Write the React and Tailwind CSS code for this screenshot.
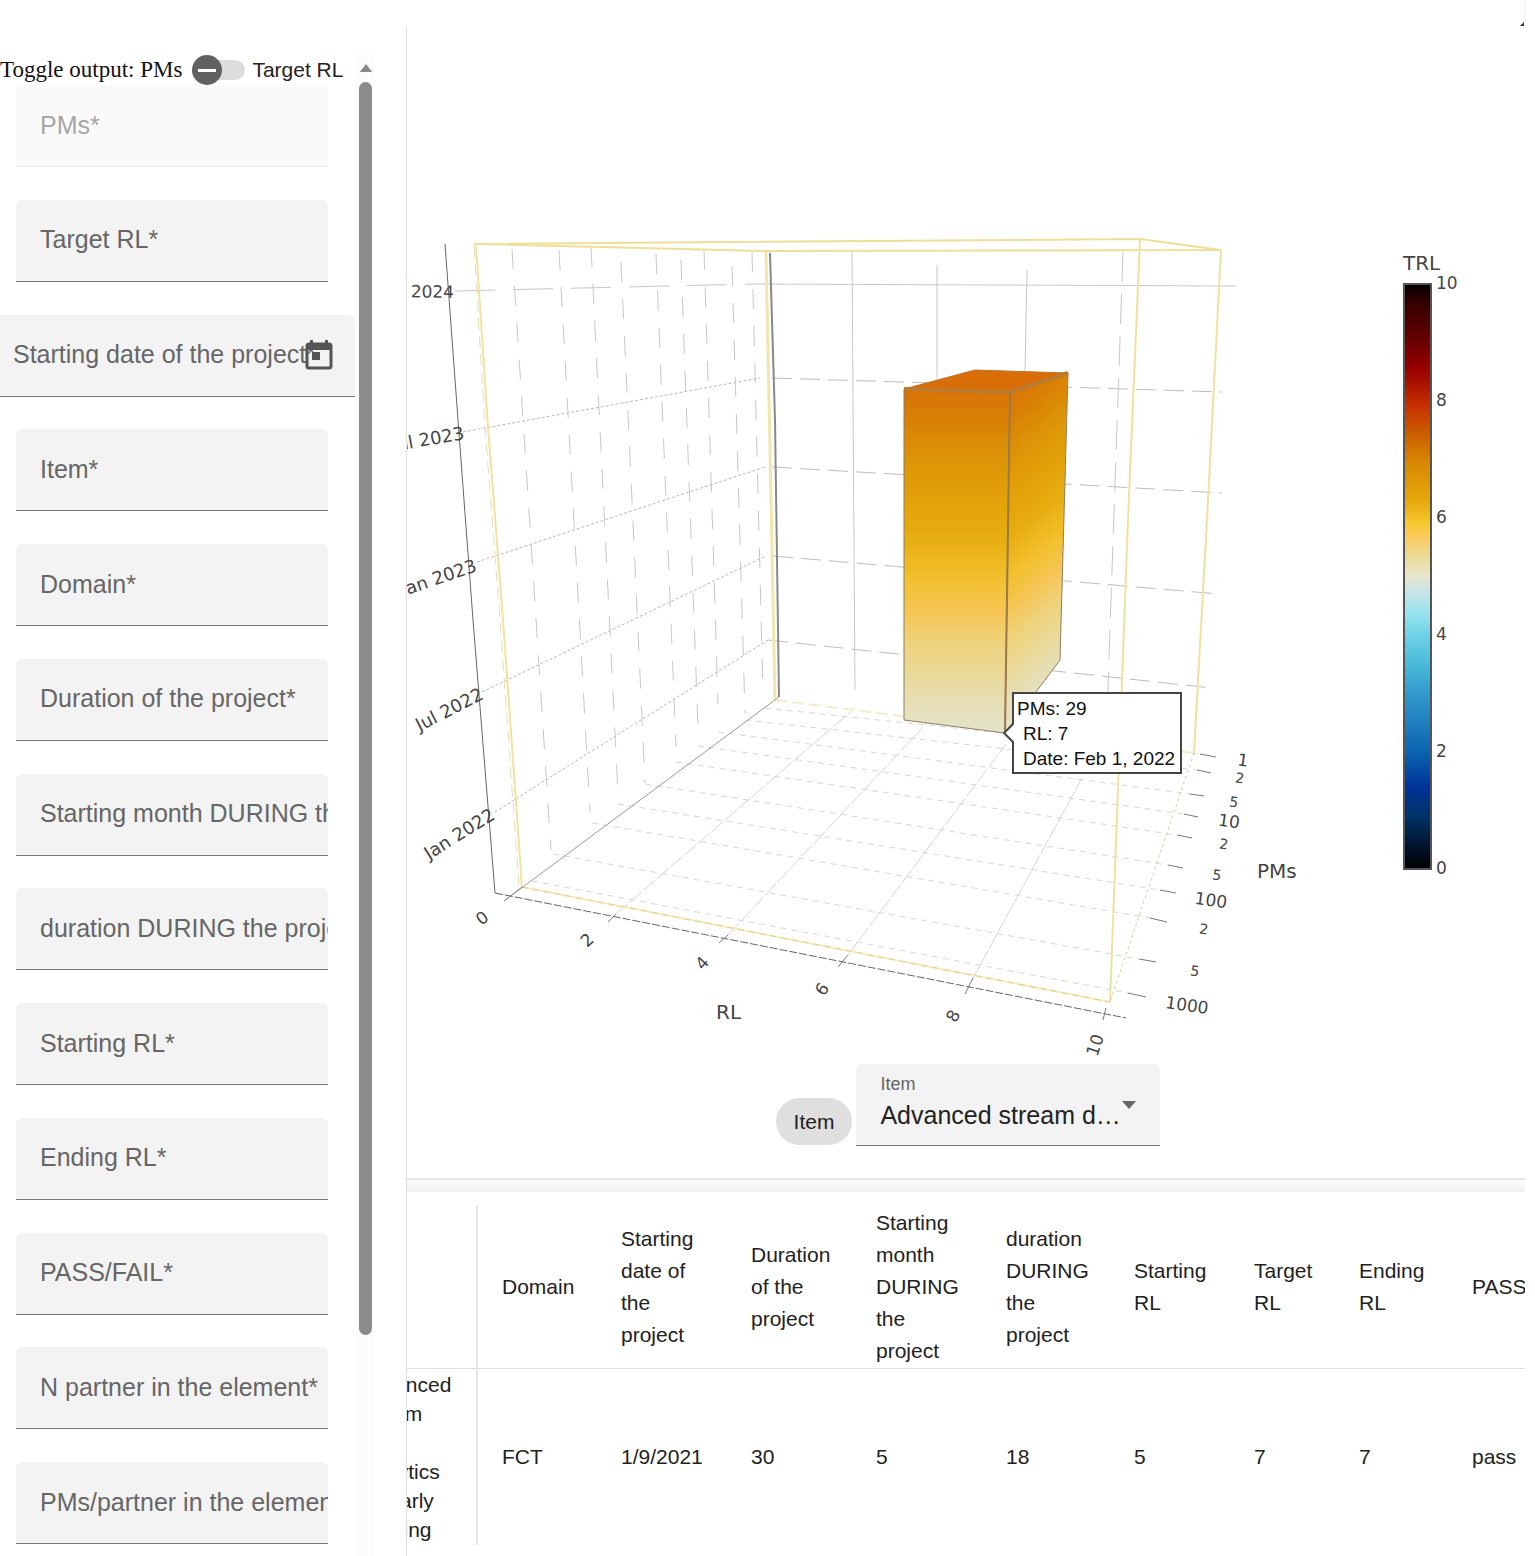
import { useState } from "react";

const FIELDS = [
  { id: "pms", label: "PMs*", disabled: true },
  { id: "target", label: "Target RL*" },
  { id: "start-date", label: "Starting date of the project*", date: true },
  { id: "item", label: "Item*" },
  { id: "domain", label: "Domain*" },
  { id: "duration", label: "Duration of the project*" },
  { id: "start-month", label: "Starting month DURING the project*" },
  { id: "duration-during", label: "duration DURING the project*" },
  { id: "start-rl", label: "Starting RL*" },
  { id: "end-rl", label: "Ending RL*" },
  { id: "pass", label: "PASS/FAIL*" },
  { id: "partners", label: "N partner in the element*" },
  { id: "pms-partner", label: "PMs/partner in the element*" },
];

function CalendarIcon() {
  return (
    <svg viewBox="0 0 28 32" className="h-8 w-7" fill="none" aria-hidden="true">
      <rect x="2" y="5" width="24" height="24" rx="2" stroke="#555" strokeWidth="3" />
      <path d="M1 5h26v6H1zM5 1h3v5H5zM20 1h3v5h-3z" fill="#555" />
      <path d="M7 13h8v8H7z" fill="#555" />
    </svg>
  );
}

function Field({ id, label, disabled, date }) {
  if (date) {
    return (
      <div className="relative flex h-[82px] w-[355px] shrink-0 items-center rounded-tr-md border-b border-[#777] bg-[#f3f3f3] pb-0.5 pl-[13px]">
        <label htmlFor={id} className="whitespace-nowrap text-[25px] leading-8 text-[#666]">
          {label}
        </label>
        <input id={id} className="absolute inset-0 bg-transparent px-3 outline-none" />
        <button type="button" aria-label="Open calendar" className="absolute right-[22px] top-6">
          <CalendarIcon />
        </button>
      </div>
    );
  }
  return (
    <div
      className={
        disabled
          ? "relative ml-4 flex h-[82px] w-[312px] shrink-0 items-center overflow-hidden rounded-t-md border-b border-[#e8e8e4] bg-[#fafafa] pb-0.5 pl-6"
          : "relative ml-4 flex h-[82px] w-[312px] shrink-0 items-center overflow-hidden rounded-t-md border-b border-[#777] bg-[#f3f3f3] pb-0.5 pl-6"
      }
    >
      <label
        htmlFor={id}
        className={
          disabled
            ? "whitespace-nowrap text-[25px] leading-8 text-[#a6a6a6]"
            : "whitespace-nowrap text-[25px] leading-8 text-[#666]"
        }
      >
        {label}
      </label>
      <input id={id} disabled={disabled} className="absolute inset-0 bg-transparent px-6 outline-none" />
    </div>
  );
}

function Sidebar() {
  const [on, setOn] = useState(false);
  return (
    <aside className="flex w-[407px] shrink-0 border-r border-[#ddd]">
      <div className="flex w-[356px] flex-col pb-3 pt-7">
        <div className="flex h-[30px] items-center whitespace-nowrap">
          <span className="font-['Liberation_Serif',serif] text-[23px] leading-7 text-[#111]">Toggle output: PMs</span>
          <button
            type="button"
            role="switch"
            aria-checked={on}
            aria-labelledby="toggle-label"
            onClick={() => setOn(!on)}
            className="ml-[10px] flex h-[30px] w-[53px] items-center"
          >
            <span className="flex h-5 w-full items-center rounded-full bg-[#dcdcdc]">
              <span className="flex size-[30px] items-center justify-center rounded-full bg-[#616161]">
                <span className="h-[3px] w-[18px] bg-white" />
              </span>
            </span>
          </button>
          <span id="toggle-label" className="ml-[7px] text-[21px] leading-7 text-[#222]">
            Target RL
          </span>
        </div>
        <form className="flex min-h-0 flex-1 flex-col justify-between">
          {FIELDS.map((f) => (
            <Field key={f.id} {...f} />
          ))}
        </form>
      </div>
      <div className="mt-7 flex w-[19px] flex-col items-center bg-[#fcfcfc] pt-[9px]">
        <svg viewBox="0 0 14 9" className="h-2 w-3.5" aria-hidden="true">
          <path d="M7 0l7 9H0z" fill="#8a8a8a" />
        </svg>
        <div className="mt-[10px] h-[84%] w-[13px] rounded-full bg-[#8b8b8b]" />
      </div>
    </aside>
  );
}

const BAR_STOPS = [
  [0, "#000000"],
  [3, "#330000"],
  [9.5, "#660000"],
  [14.5, "#990000"],
  [21, "#c83200"],
  [26.5, "#cc6600"],
  [31, "#da8a04"],
  [36.5, "#e4a50a"],
  [41, "#f8c830"],
  [43.5, "#fbcb62"],
  [46, "#ecd98a"],
  [50, "#e6e6d0"],
  [53, "#c5e3e8"],
  [56.5, "#95e3ee"],
  [60, "#6fd2e6"],
  [65.5, "#45b8d8"],
  [70, "#3399cc"],
  [80, "#0a64b0"],
  [86, "#003399"],
  [91, "#003366"],
  [96, "#00142e"],
  [100, "#000000"],
];

const SOLID_STOPS = [
  [0, "#d87206"],
  [10, "#d98205"],
  [22, "#dd9607"],
  [36, "#e4a50a"],
  [44, "#e7ae12"],
  [55, "#f2c02c"],
  [65, "#f5c656"],
  [74, "#eed37c"],
  [83, "#ead998"],
  [92, "#e6dfb8"],
  [100, "#e3e3cc"],
];

const WALL = [
  [512, 249, 551, 850],
  [559, 250, 590, 812],
  [591, 247, 618, 794],
  [621, 262, 645, 783],
  [656, 254, 676, 746],
  [681, 260, 698, 728],
  [704, 250, 718, 704],
  [732, 266, 745, 713],
  [752, 252, 763, 694],
];

const LEVELS = [
  [455, 291, 753, 284],
  [463, 432, 760, 378],
  [477, 562, 765, 467],
  [482, 692, 766, 556],
  [495, 812, 768, 640],
];

const BACK = [
  [753, 284, 1236, 286],
  [772, 378, 1222, 392],
  [772, 467, 1222, 493],
  [773, 556, 1219, 594],
  [768, 640, 1212, 688],
];

const FLOOR = [
  [765, 708, 1200, 754],
  [745, 720, 1197, 770],
  [718, 732, 1190, 794],
  [698, 746, 1184, 814],
  [676, 762, 1177, 835],
  [645, 784, 1168, 865],
  [618, 804, 1160, 890],
  [592, 823, 1150, 918],
  [553, 854, 1139, 959],
  [532, 881, 1128, 993],
];

const TICKS = [
  [1200, 754, 1216, 757],
  [1197, 770, 1211, 773],
  [1190, 794, 1204, 796],
  [1184, 814, 1198, 817],
  [1177, 835, 1192, 838],
  [1168, 865, 1183, 868],
  [1160, 890, 1176, 893],
  [1150, 918, 1167, 922],
  [1139, 959, 1156, 962],
  [1128, 993, 1146, 997],
];

const DEPTH = [
  [616, 914, 855, 708],
  [728, 935, 927, 723],
  [848, 955, 1006, 744],
  [972, 980, 1082, 778],
];

const RL_TICKS = [
  [504, 901, 522, 887],
  [608, 922, 616, 914],
  [719, 943, 728, 935],
  [838, 967, 848, 955],
  [965, 994, 973, 978],
  [1103, 1020, 1106, 1008],
];

const PM_LABELS = [
  [1243, 760, "1", 17],
  [1240, 777, "2", 14],
  [1234, 801, "5", 14],
  [1229, 821, "10", 17],
  [1224, 843, "2", 14],
  [1217, 874, "5", 14],
  [1211, 900, "100", 17],
  [1204, 928, "2", 14],
  [1195, 970, "5", 14],
  [1187, 1005, "1000", 17],
];

const RL_LABELS = [
  [482, 918, "0", -38],
  [587, 940, "2", -42],
  [702, 963, "4", -47],
  [822, 989, "6", -55],
  [953, 1016, "8", -62],
  [1095, 1045, "10", -72],
];

const DATE_LABELS = [
  [454, 292, "2024", 1, 17],
  [464, 433, "Jul 2023", -10, 18],
  [476, 565, "Jan 2023", -19, 18],
  [482, 693, "Jul 2022", -27, 18],
  [493, 813, "Jan 2022", -32, 18],
];

function Lines({ data, ...rest }) {
  return (
    <g {...rest}>
      {data.map(([x1, y1, x2, y2]) => (
        <line key={`${x1}-${y1}`} x1={x1} y1={y1} x2={x2} y2={y2} />
      ))}
    </g>
  );
}

function Stops({ stops }) {
  return stops.map(([o, c]) => <stop key={o} offset={`${o}%`} stopColor={c} />);
}

function Chart() {
  return (
    <svg
      viewBox="407 27 1118 1033"
      className="min-h-0 w-full flex-1 font-['DejaVu_Sans',Verdana,sans-serif]"
      role="img"
      aria-label="3D chart of PMs, RL and date"
    >
      <defs>
        <linearGradient id="scale" x1="0" y1="0" x2="0" y2="1">
          <Stops stops={BAR_STOPS} />
        </linearGradient>
        <linearGradient id="front" gradientUnits="userSpaceOnUse" x1="904" y1="389" x2="904" y2="733">
          <Stops stops={SOLID_STOPS} />
        </linearGradient>
        <linearGradient id="side" gradientUnits="userSpaceOnUse" x1="1005" y1="392" x2="1172" y2="597">
          <Stops stops={SOLID_STOPS} />
        </linearGradient>
      </defs>

      <Lines data={WALL} stroke="#c8c8cc" strokeDasharray="20 17" />
      <Lines data={LEVELS.slice(0, 1)} stroke="#c8c8cc" strokeDasharray="40 18" />
      <Lines data={LEVELS.slice(1)} stroke="#b8b8ba" strokeDasharray="3 2" />
      <Lines data={BACK.slice(0, 1)} stroke="#c8c8d0" />
      <Lines data={BACK.slice(1)} stroke="#bcbcc2" strokeDasharray="20 8" />
      <g stroke="#c8c8cc">
        <path d="M852 252L855 690M937 265V380M1027 270L1025 372" />
        <path d="M1123 252L1106 745" strokeDasharray="30 12" />
      </g>
      <Lines data={FLOOR} stroke="#d6d6d6" strokeDasharray="6 5" />
      <Lines data={DEPTH} stroke="#d4d4d4" strokeDasharray="16 2" />
      <Lines data={TICKS} stroke="#777" />
      <Lines data={RL_TICKS} stroke="#777" />

      <g fill="none" strokeWidth="2">
        <path d="M474 244L1140 239L1221 250L768 251Z" stroke="#eedf98" />
        <path d="M476 246L488 427L503 620L522 887" stroke="#f0e3a0" />
        <path d="M474 246L485 427L500 620L519 887" stroke="#e6dfb8" strokeWidth="1" strokeDasharray="12 6" />
        <path d="M766 252L771 500L775 700" stroke="#f1e7ae" strokeWidth="3" />
        <path d="M1140 239L1128 520L1110 1002M1221 250L1207 520L1194 753" stroke="#eee2a0" />
        <path d="M1194 753L1110 1002" stroke="#d8cc98" strokeWidth="1" strokeDasharray="3 3" />
        <path d="M522 887L1110 1002" stroke="#f4ecc0" />
        <path d="M522 887L1110 1002" stroke="#e0cf8c" strokeWidth="1" strokeDasharray="6 5" />
        <path d="M775 700L1194 753" stroke="#f4edcc" strokeDasharray="12 5" />
      </g>
      <g fill="none" stroke="#666">
        <path d="M445 244L458 420L473 620L495 893" />
        <path d="M770 253L775 420L779 697" stroke="#888" strokeWidth="2" />
        <path d="M779 697L504 901" stroke="#999" />
        <path d="M495 893L1126 1018" strokeDasharray="8 2" />
      </g>

      <g stroke="#8e7d60" strokeLinejoin="round">
        <path d="M904 389L1010 392L1005 733L904 720Z" fill="url(#front)" />
        <path d="M1010 392L1068 373L1060 660L1005 733Z" fill="url(#side)" />
        <path d="M904 389L975 370L1068 373L1010 392Z" fill="#d96d08" stroke="#b97428" />
        <path d="M904 389L1010 392L1068 373" fill="none" stroke="#bd7a2c" strokeWidth="4" />
        <path d="M1010 392L1005 733" fill="none" stroke="#9c7b48" strokeWidth="2" />
      </g>

      <g fill="#444">
        {DATE_LABELS.map(([x, y, t, r, s]) => (
          <text key={t} x={x} y={y} dy="6" fontSize={s} textAnchor="end" transform={`rotate(${r} ${x} ${y})`}>
            {t}
          </text>
        ))}
        {RL_LABELS.map(([x, y, t, r]) => (
          <text key={t} x={x} y={y} dy="6" fontSize="17" textAnchor="middle" transform={`rotate(${r} ${x} ${y})`}>
            {t}
          </text>
        ))}
        {PM_LABELS.map(([x, y, t, s]) => (
          <text key={y} x={x} y={y} dy="6" fontSize={s} textAnchor="middle" transform={`rotate(8 ${x} ${y})`}>
            {t}
          </text>
        ))}
        <text x="716" y="1019" fontSize="20">RL</text>
        <text x="1257" y="878" fontSize="20">PMs</text>
        <text x="1403" y="270" fontSize="20">TRL</text>
        {[10, 8, 6, 4, 2, 0].map((n, i) => (
          <text key={n} x="1436" y={289 + i * 117} fontSize="17">
            {n}
          </text>
        ))}
      </g>
      <rect x="1404" y="284" width="27" height="585" fill="url(#scale)" stroke="#555" strokeWidth="2" />

      <path
        d="M1013 693H1181V773H1013V742L1004 733L1013 724Z"
        fill="#fff"
        stroke="#444"
        strokeWidth="2"
      />
      <g fill="#111" fontSize="19" className="font-['Liberation_Sans',Arial,sans-serif]">
        <text x="1017" y="715">PMs: 29</text>
        <text x="1023" y="740">RL: 7</text>
        <text x="1023" y="765">Date: Feb 1, 2022</text>
      </g>
    </svg>
  );
}

function ItemPicker() {
  return (
    <div className="mt-1 flex h-[82px] shrink-0 items-end justify-center gap-1 pl-1">
      <button type="button" className="mb-px h-[47px] rounded-full bg-[#dfdfdf] px-[18px] text-[21px] leading-7 text-[#222]">
        Item
      </button>
      <div className="relative h-[82px] w-[304px] rounded-t-md border-b border-[#777] bg-[#f3f3f3]">
        <label htmlFor="item-select" className="absolute left-6 top-2 text-[18px] leading-6 text-[#666]">
          Item
        </label>
        <select
          id="item-select"
          className="h-full w-[272px] appearance-none overflow-hidden text-ellipsis whitespace-nowrap bg-transparent pl-6 pt-5 text-[25px] leading-8 text-[#222] outline-none"
        >
          <option>Advanced stream data analytics for early warning</option>
        </select>
        <svg viewBox="0 0 14 8" className="pointer-events-none absolute right-6 top-[37px] h-2 w-3.5" aria-hidden="true">
          <path d="M0 0h14L7 8z" fill="#666" />
        </svg>
      </div>
    </div>
  );
}

const COLUMNS = [
  ["Domain", "FCT"],
  ["Starting date of the project", "1/9/2021"],
  ["Duration of the project", "30"],
  ["Starting month DURING the project", "5"],
  ["duration DURING the project", "18"],
  ["Starting RL", "5"],
  ["Target RL", "7"],
  ["Ending RL", "7"],
  ["PASS/FAIL", "pass"],
];

function ResultsTable() {
  return (
    <div className="mt-[14px] shrink-0 overflow-hidden">
      <table className="-ml-[73px] w-[1275px] table-fixed border-collapse text-left text-[21px] text-[#222]">
        <colgroup>
          <col className="w-[143px]" />
          <col className="w-[120px]" />
          <col className="w-[130px]" />
          <col className="w-[125px]" />
          <col className="w-[130px]" />
          <col className="w-[128px]" />
          <col className="w-[120px]" />
          <col className="w-[105px]" />
          <col className="w-[113px]" />
          <col className="w-[161px]" />
        </colgroup>
        <thead>
          <tr className="h-[162px] border-b border-[#ddd] leading-8">
            <th scope="col" className="border-r-2 border-[#e4e4e4] px-6 font-normal">Item</th>
            {COLUMNS.map(([h]) => (
              <th key={h} scope="col" className="px-6 font-normal">{h}</th>
            ))}
          </tr>
        </thead>
        <tbody>
          <tr className="h-[177px] leading-[29px]">
            <td className="border-r-2 border-[#e4e4e4] pl-6">
              <span className="block w-[100px]">Advanced stream data analytics for early warning</span>
            </td>
            {COLUMNS.map(([h, v]) => (
              <td key={h} className="pl-6">{v}</td>
            ))}
          </tr>
        </tbody>
      </table>
    </div>
  );
}

export default function App() {
  return (
    <div className="flex h-screen flex-col overflow-hidden bg-white font-['Liberation_Sans',Arial,sans-serif]">
      <header className="flex h-[27px] shrink-0 items-end justify-end pr-[9px]">
        <svg viewBox="0 0 6 27" className="h-[27px] w-1.5" aria-hidden="true">
          <path d="M4 0h2v22H4z" fill="#f6f6f6" />
          <path d="M4 22v4H0z" fill="#333" />
        </svg>
      </header>
      <div className="flex min-h-0 flex-1">
        <Sidebar />
        <main className="mr-[10px] flex min-w-0 flex-1 flex-col pb-[11px]">
          <Chart />
          <ItemPicker />
          <div className="mt-8 h-[14px] shrink-0 border-t-2 border-[#e5e5e5] bg-linear-to-b from-[#fcfcfc] to-[#f1f1f1]" />
          <ResultsTable />
        </main>
      </div>
    </div>
  );
}
